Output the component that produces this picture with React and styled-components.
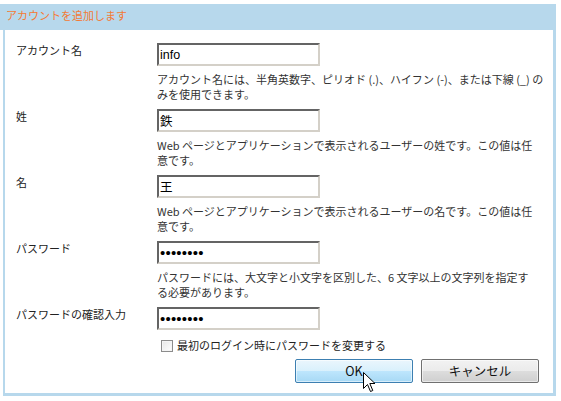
import React from 'react';
import styled, { createGlobalStyle } from 'styled-components';

const Global = createGlobalStyle`
  html, body { margin: 0; padding: 0; background: #fff; }
  body { font-family: "Noto Sans CJK JP", "Liberation Sans", sans-serif; }
`;

const Page = styled.div`
  position: relative;
  width: 561px;
  height: 401px;
  padding-top: 4px;
  box-sizing: border-box;
  overflow: hidden;
  background: #fff;
`;

const Dialog = styled.div`
  width: 556px;
`;

const Header = styled.div`
  height: 26px;
  box-sizing: border-box;
  padding: 4px 0 0 6px;
  background: #b7d8ec;
  color: #f47a34;
  font-size: 11px;
  line-height: 15px;
`;

const Body = styled.div`
  margin-left: 3px;
  width: 553px;
  height: 366px;
  box-sizing: border-box;
  border: 3px solid #b7d8ec;
  border-top: 0;
  border-left-width: 2px;
  padding: 13px 14px 0 11px;
  background: #fff;
`;

const Field = styled.div`
  display: grid;
  grid-template-columns: 141px 1fr;
  margin-bottom: 7px;
`;

const Label = styled.div`
  margin-top: 0;
  font-size: 11px;
  line-height: 15px;
  color: #222;
  white-space: nowrap;
`;

const Control = styled.div`
  display: flex;
  flex-direction: column;
  align-items: flex-start;
`;

const TextBox = styled.input`
  width: 163px;
  height: 23px;
  box-sizing: border-box;
  margin: 0;
  padding: 0 1px;
  border-style: solid;
  border-width: 2px;
  border-color: #646464 #d4d0c8 #d4d0c8 #646464;
  background: #fff;
  color: #000;
  font-family: "Liberation Sans", "Noto Sans CJK JP", sans-serif;
  font-size: ${p => (p.type === 'password' ? '15px' : '12.5px')};
  letter-spacing: ${p => (p.type === 'password' ? '0.2px' : '0')};
  outline: none;
`;

const Desc = styled.div`
  margin-top: 6px;
  font-size: 11px;
  line-height: 15px;
  color: #333;
  white-space: nowrap;
`;

const CheckRow = styled.label`
  display: flex;
  align-items: center;
  gap: 4px;
  margin: 8px 0 0 145px;
  font-size: 11px;
  line-height: 15px;
  color: #222;
`;

const Check = styled.input`
  appearance: none;
  margin: 0;
  width: 12px;
  height: 12px;
  box-sizing: border-box;
  border: 1px solid #8c8c8c;
  background: linear-gradient(135deg, #e6e6e6, #ffffff);
  box-shadow: inset 0 0 0 1px #f4f4f4;
`;

const ButtonRow = styled.div`
  display: flex;
  justify-content: flex-end;
  gap: 8px;
  margin-top: 6px;
`;

const Button = styled.button`
  position: relative;
  width: 118px;
  height: 24px;
  margin: 0;
  padding: 0;
  box-sizing: border-box;
  border: 1px solid ${p => (p.$primary ? '#3c7fb1' : '#707070')};
  border-radius: 2px;
  background: ${p =>
    p.$primary
      ? 'linear-gradient(#eaf6fd 0%, #d9f0fc 50%, #bee6fd 50%, #a7d9f5 100%)'
      : 'linear-gradient(#f2f2f2 0%, #ebebeb 50%, #dddddd 50%, #cfcfcf 100%)'};
  box-shadow: inset 0 0 0 1px rgba(255, 255, 255, 0.55);
  color: #111;
  font-family: "Noto Sans CJK JP", "Liberation Sans", sans-serif;
  font-size: 12.5px;
  line-height: 22px;
  cursor: default;
`;

const Cursor = styled.svg`
  position: absolute;
  left: 67px;
  top: 12px;
  width: 13px;
  height: 21px;
  pointer-events: none;
`;

const fields = [
  {
    label: 'アカウント名',
    value: 'info',
    desc: ['アカウント名には、半角英数字、ピリオド (.)、ハイフン (-)、または下線 (_) の', 'みを使用できます。'],
  },
  {
    label: '姓',
    value: '鉄',
    desc: ['Web ページとアプリケーションで表示されるユーザーの姓です。この値は任', '意です。'],
  },
  {
    label: '名',
    value: '王',
    desc: ['Web ページとアプリケーションで表示されるユーザーの名です。この値は任', '意です。'],
  },
  {
    label: 'パスワード',
    value: 'password',
    type: 'password',
    desc: ['パスワードには、大文字と小文字を区別した、6 文字以上の文字列を指定す', 'る必要があります。'],
  },
  {
    label: 'パスワードの確認入力',
    value: 'password',
    type: 'password',
  },
];

export default function App() {
  return (
    <Page>
      <Global />
      <Dialog>
        <Header>アカウントを追加します</Header>
        <Body>
          {fields.map((f, i) => (
            <Field key={i}>
              <Label>{f.label}</Label>
              <Control>
                <TextBox type={f.type || 'text'} defaultValue={f.value} />
                {f.desc && (
                  <Desc>
                    {f.desc[0]}
                    <br />
                    {f.desc[1]}
                  </Desc>
                )}
              </Control>
            </Field>
          ))}
          <CheckRow>
            <Check type="checkbox" />
            最初のログイン時にパスワードを変更する
          </CheckRow>
          <ButtonRow>
            <Button $primary>
              OK
              <Cursor viewBox="0 0 13 21">
                <path
                  d="M0.5 0.5 L0.5 16.5 L4.5 12.5 L7.5 19.5 L9.8 18.5 L6.8 11.5 L12 11.5 Z"
                  fill="#fff"
                  stroke="#000"
                  strokeWidth="1"
                  strokeLinejoin="miter"
                />
              </Cursor>
            </Button>
            <Button>キャンセル</Button>
          </ButtonRow>
        </Body>
      </Dialog>
    </Page>
  );
}
